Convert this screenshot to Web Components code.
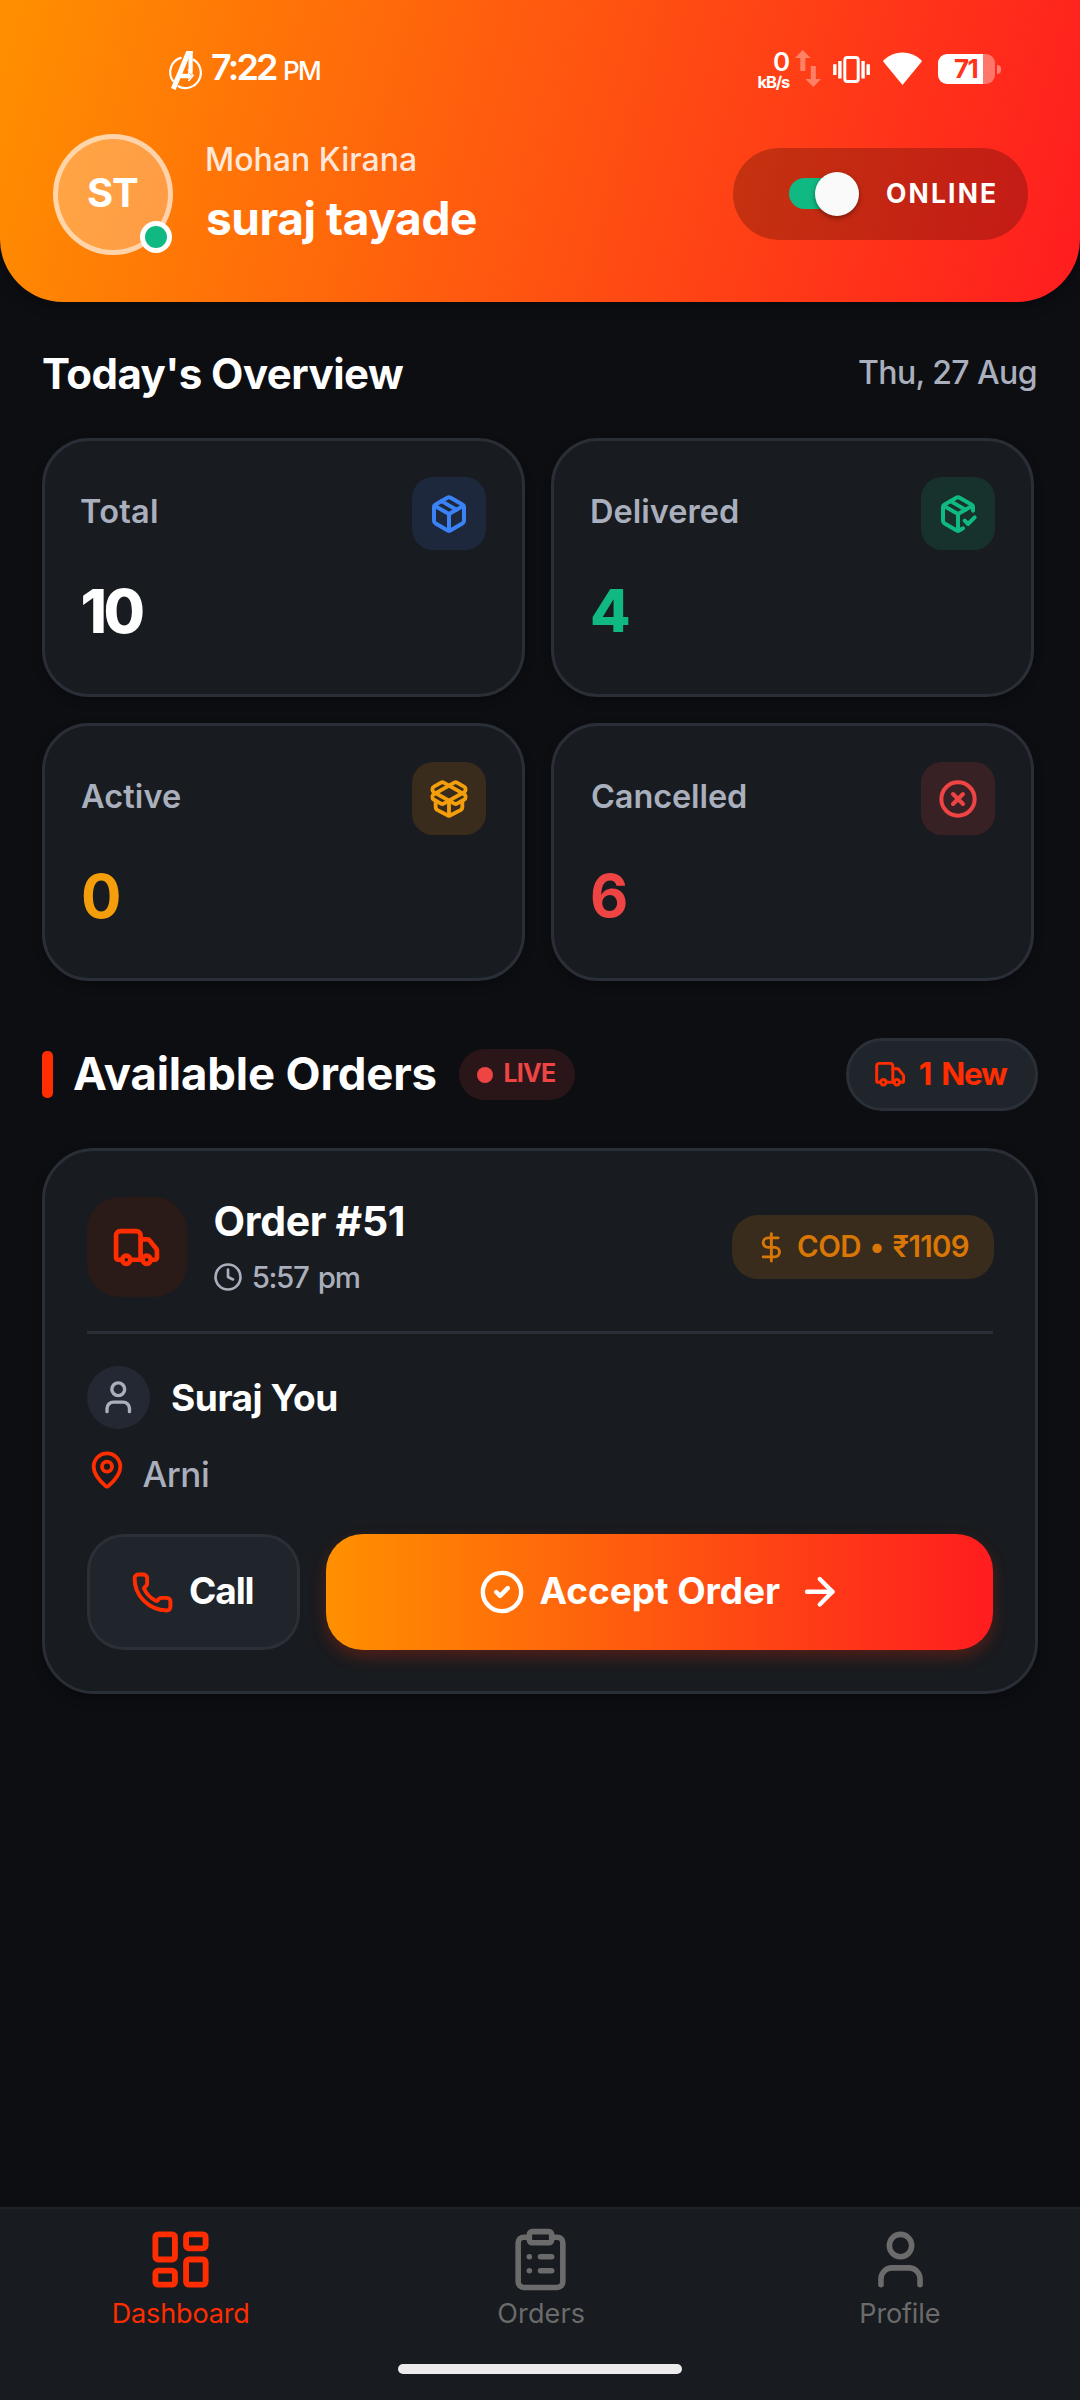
<!DOCTYPE html>
<html lang="en">
<head>
<meta charset="utf-8">
<title>Delivery dashboard</title>
<style>
  html, body { margin: 0; padding: 0; background: #0d0e12; }
  body { width: 1080px; height: 2400px; overflow: hidden; font-family: Inter, "Open Sans", sans-serif; color: #fff; }
</style>
</head>
<body>
<dash-app></dash-app>
<script>
const FONT = 'Inter, "Open Sans", sans-serif';
const ctx = document.createElement('canvas').getContext('2d');

/* One line of text whose box is exactly its inked width. */
class UiText extends HTMLElement {
  connectedCallback() {
    if (this.shadowRoot) return;
    const size = +this.getAttribute('size'), weight = this.getAttribute('weight') || 500;
    const w = +this.getAttribute('w'), lh = this.getAttribute('lh') || Math.round(size * 1.3);
    const ws = +(this.getAttribute('ws') || 0);
    const text = this.textContent;
    ctx.font = `${weight} ${size}px ${FONT}`;
    const m = ctx.measureText(text);
    const ink = m.actualBoundingBoxLeft + m.actualBoundingBoxRight + ws * (text.split(' ').length - 1);
    const n = [...text].length;
    const ls = n > 1 ? (w - ink) / (n - 1) : 0;
    this.attachShadow({ mode: 'open' }).innerHTML = `<style>
      :host { display: block; flex: none; white-space: nowrap; width: ${w}px; font: ${weight} ${size}px/${lh}px ${FONT};
        letter-spacing: ${ls.toFixed(3)}px; word-spacing: ${ws}px; text-indent: ${m.actualBoundingBoxLeft.toFixed(2)}px; }
    </style><slot></slot>`;
  }
}
customElements.define('ui-text', UiText);

const ICONS = {
  package: '<path d="M11 21.73a2 2 0 0 0 2 0l7-4A2 2 0 0 0 21 16V8a2 2 0 0 0-1-1.73l-7-4a2 2 0 0 0-2 0l-7 4A2 2 0 0 0 3 8v8a2 2 0 0 0 1 1.73z"/><path d="M12 22V12"/><path d="M3.29 7 12 12l8.71-5"/><path d="m7.5 4.27 9 5.15"/>',
  check: '<path d="m16 16 2 2 4-4"/><path d="M21 10V8a2 2 0 0 0-1-1.73l-7-4a2 2 0 0 0-2 0l-7 4A2 2 0 0 0 3 8v8a2 2 0 0 0 1 1.73l7 4a2 2 0 0 0 2 0l2-1.14"/><path d="m7.5 4.27 9 5.15"/><path d="M3.29 7 12 12l8.71-5"/><path d="M12 22V12"/>',
  open: '<path d="M12 22v-9"/><path d="M15.17 2.21a1.67 1.67 0 0 1 1.63 0L21 4.57a1.93 1.93 0 0 1 0 3.36L8.82 14.79a1.655 1.655 0 0 1-1.64 0L3 12.43a1.93 1.93 0 0 1 0-3.36z"/><path d="M20 13v3.87a2.06 2.06 0 0 1-1.11 1.83l-6 3.08a1.93 1.93 0 0 1-1.78 0l-6-3.08A2.06 2.06 0 0 1 4 16.87V13"/><path d="M21 12.43a1.93 1.93 0 0 0 0-3.36L8.83 2.2a1.64 1.64 0 0 0-1.63 0L3 4.57a1.93 1.93 0 0 0 0 3.36l12.18 6.86a1.636 1.636 0 0 0 1.63 0z"/>',
  cross: '<circle cx="12" cy="12" r="10"/><path d="m15 9-6 6"/><path d="m9 9 6 6"/>',
  truck: '<path d="M14 18V6a2 2 0 0 0-2-2H4a2 2 0 0 0-2 2v11a1 1 0 0 0 1 1h2"/><path d="M15 18H9"/><path d="M19 18h2a1 1 0 0 0 1-1v-3.65a1 1 0 0 0-.22-.624l-3.48-4.35A1 1 0 0 0 17.52 8H14"/><circle cx="17" cy="18" r="2"/><circle cx="7" cy="18" r="2"/>',
  clock: '<circle cx="12" cy="12" r="10"/><path d="M12 6v6l4 2"/>',
  dollar: '<path d="M12 2v20"/><path d="M17 5H9.5a3.5 3.5 0 0 0 0 7h5a3.5 3.5 0 0 1 0 7H6"/>',
  user: '<path d="M19 21v-2a4 4 0 0 0-4-4H9a4 4 0 0 0-4 4v2"/><circle cx="12" cy="7" r="4"/>',
  pin: '<path d="M20 10c0 4.993-5.539 10.193-7.399 11.799a1 1 0 0 1-1.202 0C9.539 20.193 4 14.993 4 10a8 8 0 0 1 16 0"/><circle cx="12" cy="10" r="3"/>',
  phone: '<path d="M13.832 16.568a1 1 0 0 0 1.213-.303l.355-.465A2 2 0 0 1 17 15h3a2 2 0 0 1 2 2v3a2 2 0 0 1-2 2A18 18 0 0 1 2 4a2 2 0 0 1 2-2h3a2 2 0 0 1 2 2v3a2 2 0 0 1-.8 1.6l-.468.351a1 1 0 0 0-.292 1.233 14 14 0 0 0 6.392 6.384"/>',
  accept: '<circle cx="12" cy="12" r="10"/><path d="m9 12 2 2 4-4"/>',
  arrow: '<path d="M5 12h14"/><path d="m12 5 7 7-7 7"/>',
  dashboard: '<rect width="7" height="9" x="3" y="3" rx="1"/><rect width="7" height="5" x="14" y="3" rx="1"/><rect width="7" height="9" x="14" y="12" rx="1"/><rect width="7" height="5" x="3" y="16" rx="1"/>',
  orders: '<rect width="8" height="4" x="8" y="2" rx="1"/><path d="M16 4h2a2 2 0 0 1 2 2v14a2 2 0 0 1-2 2H6a2 2 0 0 1-2-2V6a2 2 0 0 1 2-2h2"/><path d="M12 11h4"/><path d="M12 16h4"/><path d="M8 11h.01"/><path d="M8 16h.01"/>'
};
class UiIcon extends HTMLElement {
  connectedCallback() {
    if (this.shadowRoot) return;
    const s = this.getAttribute('size');
    this.attachShadow({ mode: 'open' }).innerHTML = `<style>
      :host { display: block; flex: none; width: ${s}px; height: ${s}px; }
      svg { display: block; width: 100%; height: 100%; overflow: visible; fill: none; stroke: currentColor; stroke-width: ${this.getAttribute('sw') || 2}; stroke-linecap: round; stroke-linejoin: round; }
    </style><svg viewBox="0 0 24 24">${ICONS[this.getAttribute('name')]}</svg>`;
  }
}
customElements.define('ui-icon', UiIcon);

function define(name, markup) {
  const t = document.createElement('template');
  t.innerHTML = markup;
  customElements.define(name, class extends HTMLElement {
    constructor() {
      super();
      this.attachShadow({ mode: 'open' }).append(t.content.cloneNode(true));
    }
  });
}

define('status-bar', `<style>
  :host { display: flex; align-items: center; height: 134px; padding: 0 79px 0 169px; box-sizing: border-box; color: #fff; }
  svg { display: block; flex: none; overflow: visible; }
  .time { margin: 1px 0 0 11px; } .pm { margin: 8px 0 0 8px; }
  .net { margin-left: auto; margin-top: 8px; display: flex; flex-direction: column; align-items: flex-end; }
  .net .n { margin-right: 1px; }
  .arrows { margin: 3px 0 0 5px; } .vib { margin: 4px 0 0 12px; } .wifi { margin: 3px 0 0 13px; }
  .battery { margin: 4px 0 0 16px; display: flex; align-items: center; }
  .cell { width: 57px; height: 30px; border-radius: 9px; display: flex; align-items: center; box-sizing: border-box; padding-left: 16px; color: #ff3319;
    background: linear-gradient(90deg, #fff 45px, rgba(255,255,255,.35) 45px); }
  .tip { width: 4px; height: 9px; margin-left: 2px; border-radius: 0 5px 5px 0; background: rgba(255,255,255,.4); }
</style>
<svg style="margin-top:6px" width="32" height="38" viewBox="0 0 32 38" fill="none" stroke="#fff">
  <path d="M12.500 6.600A15 15 0 0 0 4.500 30.500M8.800 35A15 15 0 1 0 24 8.200" stroke-width="2.200"/>
  <path d="M4.300 38 19.600 1" stroke-width="5"/><path d="M17.400 1.500H23.700" stroke-width="3"/><path d="M21.600 0V22" stroke-width="4.200"/><path d="M10 25H20.500" stroke-width="4.500"/>
  <path d="M19 18.500 24 24.500 19.500 30" stroke-width="1.600"/><path d="M19 21V28.500L23 25Z" fill="#fff" stroke="none"/>
</svg>
<ui-text class="time" size="36" weight="600" w="65">7:22</ui-text>
<ui-text class="pm" size="26" weight="500" w="35">PM</ui-text>
<div class="net"><ui-text class="n" size="26" weight="600" w="15" lh="22">0</ui-text><ui-text size="16.500" weight="700" w="31.400" lh="19">kB/s</ui-text></div>
<svg class="arrows" width="26" height="37" viewBox="0 0 26 37" fill="#fff" fill-opacity=".35"><path d="M7.800 0 15.500 8H10.300V21H5.300V8H0ZM18.300 37 10.500 29H15.800V16H20.800V29H26Z"/></svg>
<svg class="vib" width="37" height="27" viewBox="0 0 37 27" fill="none" stroke="#fff" stroke-width="3"><rect x="11.800" y="1.500" width="13.400" height="24" rx="2.500"/><path d="M6.900 5V22.500M30.100 5V22.500M1.800 8.300V19M35.200 8.300V19" stroke-width="3.400"/></svg>
<svg class="wifi" width="39" height="33" viewBox="0 0 39 33" fill="#fff"><path d="M.4 9.800Q-.2 9 .6 8.300A27 27 0 0 1 38.400 8.300Q39.200 9 38.600 9.800L19.500 33Z"/></svg>
<div class="battery"><div class="cell"><ui-text size="26" weight="700" w="23.500" lh="30">71</ui-text></div><div class="tip"></div></div>`);

define('online-switch', `<style>
  :host { display: flex; align-items: center; flex: none; width: 295px; height: 92px; box-sizing: border-box; padding: 0 0 1px 56px; margin-bottom: 1px; border-radius: 46px; background: rgba(0,0,0,.23); }
  .track { display: flex; align-items: center; justify-content: flex-end; width: 66px; height: 31px; border-radius: 16px; background: #10b981; }
  .thumb { flex: none; width: 44px; height: 44px; margin-right: -4px; border-radius: 50%; background: #fafafa; box-shadow: 0 2px 5px rgba(0,0,0,.4); }
  ui-text { margin: 0 0 1px 32px; }
</style><div class="track"><div class="thumb"></div></div><ui-text size="26.500" weight="700" w="108">ONLINE</ui-text>`);

define('app-header', `<style>
  :host { display: block; height: 302px; border-radius: 0 0 63px 63px; background: linear-gradient(105.600deg, #ff9000, #ff1c1f); box-shadow: 0 4px 14px rgba(0,0,0,.3); }
  .row { display: flex; align-items: center; height: 121px; padding: 0 52px 0 53px; }
  .avatar { position: relative; flex: none; width: 120px; height: 121px; box-sizing: border-box; border: 5px solid rgba(255,255,255,.55); border-radius: 50%; background: rgba(255,255,255,.26); display: flex; align-items: center; justify-content: center; }
  .avatar ui-text { margin-bottom: 3px; }
  .dot { position: absolute; right: -4px; bottom: -3px; width: 22px; height: 22px; border: 5px solid #fff; border-radius: 50%; background: #10b981; }
  .names { margin: 0 auto 11px 34px; } .store { color: rgba(255,255,255,.85); }
</style>
<status-bar></status-bar>
<div class="row">
  <div class="avatar"><ui-text size="40" weight="700" w="50">ST</ui-text><div class="dot"></div></div>
  <div class="names"><ui-text class="store" size="32" weight="500" w="208" lh="58">Mohan Kirana</ui-text><ui-text size="46" weight="650" w="269" lh="58">suraj tayade</ui-text></div>
  <online-switch></online-switch>
</div>`);

define('stat-card', `<style>
  :host { display: block; box-sizing: border-box; padding: 36px 36px 0; border: 3px solid #2a2e36; border-radius: 47px; background: #181b1f; box-shadow: 0 4px 10px rgba(0,0,0,.25); }
  .top { display: flex; justify-content: space-between; align-items: center; color: #a9afbc; height: 73px; margin-bottom: 31px; }
  ::slotted([slot=label]) { margin-bottom: 3px; }
  .box { width: 74px; height: 73px; border-radius: 21px; display: flex; align-items: center; justify-content: center; background: var(--tint); color: var(--accent); }
</style><div class="top"><slot name="label"></slot><div class="box"><slot name="icon"></slot></div></div><slot></slot>`);

define('orders-heading', `<style>
  :host { display: flex; align-items: center; height: 73px; margin: 57px 42px 0; }
  .bar { width: 11px; height: 47px; border-radius: 5px; background: #ff2d00; margin-right: 21px; }
  .h { margin-bottom: 3px; }
  .live { display: flex; align-items: center; box-sizing: border-box; width: 115.600px; height: 51px; padding-left: 18px; margin-left: 23.500px; border-radius: 25.500px; background: #2a1519; color: #ef4444; }
  .dot { width: 16px; height: 16px; border-radius: 50%; background: #ef4444; margin-right: 11.300px; }
  .live ui-text { margin-bottom: 2px; }
  .new { margin-left: auto; display: flex; align-items: center; box-sizing: border-box; width: 192px; height: 73px; padding-left: 25px; border: 3px solid #2b2f37; border-radius: 37px; background: #20242b; color: #ff2d00; }
  .new ui-text { margin: 0 0 2px 13.500px; }
</style>
<div class="bar"></div><ui-text class="h" size="45.500" weight="650" w="361.600">Available Orders</ui-text>
<div class="live"><div class="dot"></div><ui-text size="25" weight="700" w="50.500">LIVE</ui-text></div>
<div class="new"><ui-icon name="truck" size="32.300" sw="2.200"></ui-icon><ui-text size="31.500" weight="700" w="88.300" ws="4">1 New</ui-text></div>`);

define('order-card', `<style>
  :host { display: block; box-sizing: border-box; width: 996px; height: 546px; margin: 37px 42px 0; padding: 46px 42px 0; border: 3px solid #2a2e36; border-radius: 52px; background: #181b1f; box-shadow: 0 5px 12px rgba(0,0,0,.3); }
  .row { display: flex; align-items: center; }
  .head { height: 100px; }
  .truck { display: flex; align-items: center; justify-content: center; width: 99.500px; height: 100px; border-radius: 33px; background: #2a1a18; color: #ff2d00; }
  .info { margin: 4px auto 0 28px; display: grid; gap: 6px; }
  .time { color: #a9afbc; gap: 10.700px; margin-left: -1.500px; }
  .cod { width: 262px; height: 64px; box-sizing: border-box; padding-left: 23px; margin-right: -1px; gap: 10.400px; border-radius: 26px; background: #392c1d; color: #d97706; }
  .cod ui-text { margin-bottom: 3px; }
  hr { border: 0; height: 3px; margin: 34px 0 32px; background: #2a2e36; }
  .who { height: 63px; gap: 22px; }
  .face { width: 63px; height: 63px; border-radius: 50%; background: #242833; color: #a9afbc; display: flex; align-items: center; justify-content: center; }
  .where { height: 40px; margin: 21px 0 44px -.5px; gap: 16px; color: #ff2d00; }
  .where ui-text { color: #a9afbc; margin-top: 7px; }
  .actions { gap: 26px; }
  .btn { display: flex; align-items: center; box-sizing: border-box; height: 116px; border-radius: 37px; }
  .btn ui-text { margin-bottom: 3px; }
  .call { width: 213px; padding-left: 41px; gap: 16px; border: 3px solid #2b2f37; background: #20242b; }
  .call ui-icon { color: #ff2d00; }
  .accept { width: 667px; padding-left: 153px; background: linear-gradient(90deg, #ff9000, #ff1c1f); box-shadow: 0 7px 16px rgba(255,45,0,.25); }
</style>
<div class="row head">
  <div class="truck"><ui-icon name="truck" size="49" sw="2.300"></ui-icon></div>
  <div class="info"><ui-text size="41" weight="650" w="188.300" lh="50">Order #51</ui-text>
    <div class="row time"><ui-icon name="clock" size="30" sw="2.100"></ui-icon><ui-text size="29.500" weight="500" w="106" lh="50" ws="3">5:57 pm</ui-text></div></div>
  <div class="row cod"><ui-icon name="dollar" size="32.700" sw="2.100"></ui-icon><ui-text size="29.500" weight="600" w="170.700" ws="2">COD • ₹1109</ui-text></div>
</div>
<hr>
<div class="row who"><div class="face"><ui-icon name="user" size="38.500" sw="2.100"></ui-icon></div><ui-text size="37" weight="650" w="164.300">Suraj You</ui-text></div>
<div class="row where"><ui-icon name="pin" size="40" sw="2.300"></ui-icon><ui-text size="35" weight="450" w="65.400">Arni</ui-text></div>
<div class="row actions">
  <div class="btn call"><ui-icon name="phone" size="43" sw="2.200"></ui-icon><ui-text size="37" weight="650" w="62.600">Call</ui-text></div>
  <div class="btn accept"><ui-icon name="accept" size="46" sw="2.300"></ui-icon><ui-text style="margin-left:14.500px;margin-right:17.500px" size="37" weight="650" w="240.500">Accept Order</ui-text><ui-icon name="arrow" size="43.500" sw="2.400"></ui-icon></div>
</div>`);

define('nav-item', `<style>
  :host { flex: 1; display: flex; flex-direction: column; align-items: center; gap: 5px; color: #6b6b6b; }
  :host([active]) { color: #ff2d00; }
</style><slot></slot>`);

define('bottom-nav', `<style>
  :host { display: block; margin-top: auto; height: 193px; box-sizing: border-box; border-top: 2px solid #1f2327; padding-top: 16.500px; background: #181b1f; }
  nav { display: flex; height: 107px; } .home { width: 284px; height: 10px; border-radius: 5px; margin: 31px auto 0; background: #ececec; }
</style>
<nav>
  <nav-item active><ui-icon name="dashboard" size="67" sw="2.100"></ui-icon><ui-text style="margin-left:2px" size="27" weight="400" w="134.700" lh="32">Dashboard</ui-text></nav-item>
  <nav-item><ui-icon name="orders" size="67"></ui-icon><ui-text style="margin-left:2px" size="27" weight="400" w="85.700" lh="32">Orders</ui-text></nav-item>
  <nav-item><ui-icon name="user" size="67"></ui-icon><ui-text style="margin-left:1px" size="27" weight="400" w="78.300" lh="32">Profile</ui-text></nav-item>
</nav>
<div class="home"></div>`);

define('dash-app', `<style>
  :host { display: flex; flex-direction: column; width: 1080px; height: 2400px; background: #0d0e12; }
  .title { display: flex; align-items: center; justify-content: space-between; height: 128px; margin-top: 8px; padding: 0 44px 0 43px; }
  .title ui-text { margin-bottom: 2px; }
  .date { color: #a9afbc; }
  .grid { display: grid; grid-template: 259px 258px / 483px 483px; gap: 26px; padding-left: 42px; }
</style>
<app-header></app-header>
<div class="title"><ui-text size="42" weight="650" w="361">Today's Overview</ui-text><ui-text class="date" size="32" weight="500" w="177">Thu, 27 Aug</ui-text></div>
<div class="grid">
  <stat-card style="--tint:#1d283d;--accent:#3b82f6"><ui-text slot="label" size="32.500" weight="600" w="76">Total</ui-text><ui-icon slot="icon" name="package" size="40" sw="2.400"></ui-icon><ui-text style="padding-left:1.500px" size="60" weight="800" w="61" lh="60">10</ui-text></stat-card>
  <stat-card style="--tint:#17312c;--accent:#10b981"><ui-text slot="label" size="32.500" weight="600" w="146" style="padding-left:2px">Delivered</ui-text><ui-icon slot="icon" name="check" size="40" sw="2.400"></ui-icon><ui-text style="color:#10b981;padding-left:2px" size="59" weight="800" w="34" lh="60">4</ui-text></stat-card>
  <stat-card style="--tint:#392c1d;--accent:#f59e0b"><ui-text slot="label" size="32.500" weight="600" w="99">Active</ui-text><ui-icon slot="icon" name="open" size="40" sw="2.300"></ui-icon><ui-text style="color:#f59e0b;padding-left:2px" size="60" weight="750" w="35" lh="60">0</ui-text></stat-card>
  <stat-card style="--tint:#382125;--accent:#ef4444"><ui-text slot="label" size="32.500" weight="600" w="154" style="padding-left:2px">Cancelled</ui-text><ui-icon slot="icon" name="cross" size="40" sw="2.400"></ui-icon><ui-text style="color:#ef4444;padding-left:2px" size="59" weight="750" w="32" lh="60">6</ui-text></stat-card>
</div>
<orders-heading></orders-heading>
<order-card></order-card>
<bottom-nav></bottom-nav>`);
</script>
</body>
</html>
